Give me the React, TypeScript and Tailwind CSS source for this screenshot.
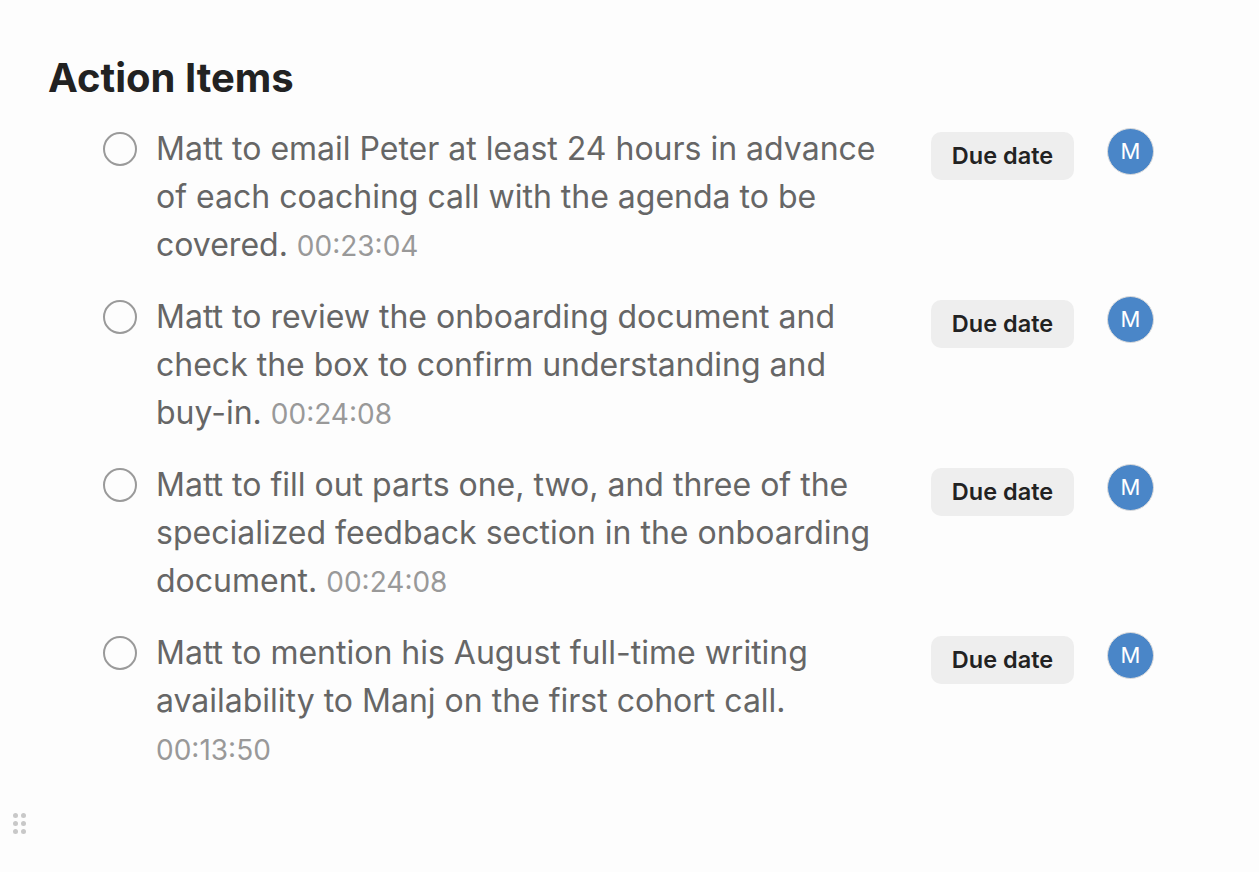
import React from 'react';

type Item = { text: string; time: string };

const items: Item[] = [
  {
    text: 'Matt to email Peter at least 24 hours in advance of each coaching call with the agenda to be covered.',
    time: '00:23:04',
  },
  {
    text: 'Matt to review the onboarding document and check the box to confirm understanding and buy-in.',
    time: '00:24:08',
  },
  {
    text: 'Matt to fill out parts one, two, and three of the specialized feedback section in the onboarding document.',
    time: '00:24:08',
  },
  {
    text: 'Matt to mention his August full-time writing availability to Manj on the first cohort call.',
    time: '00:13:50',
  },
];

function ActionRow({ item }: { item: Item }) {
  return (
    <li className="flex items-start">
      <span className="mt-[7px] ml-[103px] h-[34px] w-[34px] shrink-0 rounded-full border-2 border-[#9a9a9a]" />
      <p className="ml-[19px] w-[740px] text-[32px] leading-[48px] text-[#666666]">
        {item.text}{' '}
        <span className="text-[28px] leading-none text-[#999999]">{item.time}</span>
      </p>
      <button className="mt-[7px] ml-[35px] h-[48px] w-[143px] shrink-0 rounded-[10px] bg-[#eeeeee] text-[23.5px] font-semibold text-[#222222]">
        Due date
      </button>
      <span className="mt-[3px] ml-[33px] flex h-[47px] w-[47px] shrink-0 items-center justify-center rounded-full border border-[#dcdcdc] bg-[#4a86c8] text-[22px] text-white">
        M
      </span>
    </li>
  );
}

export default function App() {
  return (
    <div
      className="min-h-[872px] bg-[#fdfdfd] pt-[55px]"
      style={{ fontFamily: 'Inter, "Liberation Sans", sans-serif' }}
    >
      <h1 className="pl-[48px] text-[40px] leading-[46px] font-bold text-[#222222]">
        Action Items
      </h1>
      <ul className="mt-[24px] flex flex-col gap-[24px]">
        {items.map((it, i) => (
          <ActionRow key={i} item={it} />
        ))}
      </ul>
      {/* drag handle */}
      <div className="mt-[40px] ml-[13px] grid w-[13px] grid-cols-2 gap-[3px]">
        {Array.from({ length: 6 }).map((_, i) => (
          <span key={i} className="h-[5px] w-[5px] rounded-full bg-[#c8c8c8]" />
        ))}
      </div>
    </div>
  );
}
